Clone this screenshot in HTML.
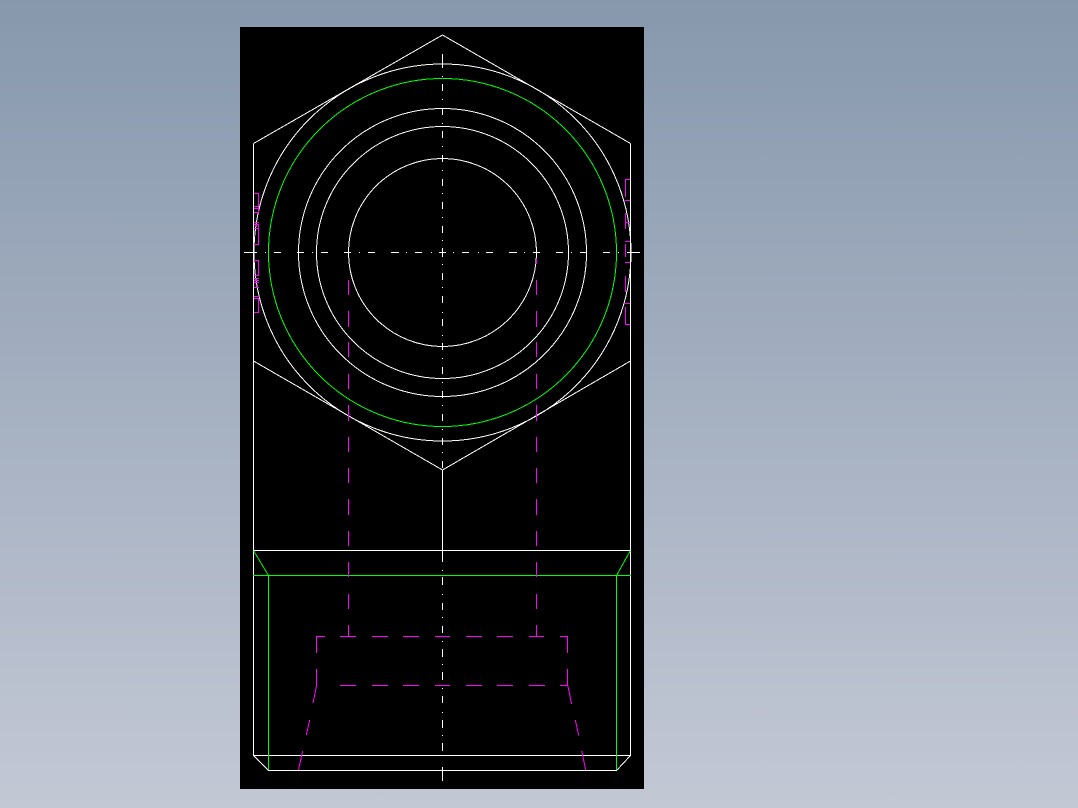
<!DOCTYPE html>
<html><head><meta charset="utf-8"><style>
html,body{margin:0;padding:0;width:1078px;height:808px;overflow:hidden;background:linear-gradient(180deg,#8798ad 0%,#c3c8d5 100%)}
svg{position:absolute;left:0;top:0}
</style></head><body>
<svg width="1078" height="808" viewBox="0 0 1078 808" fill="none" shape-rendering="crispEdges" stroke-width="1">
<rect x="240" y="27" width="404" height="762" fill="#000"/>
<g stroke="#fff">
<path d="M442.5 35L630.5 143.5M442.5 35L253.5 143.5M253.5 361L442.5 470L630.5 361"/>
<path d="M253.5 143.5V755.5M630.5 143.5V755.5M253 550.5H631M253 755.5H631M268 770.5H617M442.5 470V562"/>
<path d="M253.5 755.5L268.5 770.5M630.5 755.5L616.5 770.5"/>
<circle cx="442.5" cy="252.5" r="188.5"/>
<circle cx="442.5" cy="252.5" r="144"/>
<circle cx="442.5" cy="252.5" r="126"/>
<circle cx="442.5" cy="252.5" r="94"/>
<path d="M442.5 54V68M442.5 76V77M442.5 84V91M442.5 99V100M442.5 108V115M442.5 123V124M442.5 131V138M442.5 146V147M442.5 155V162M442.5 170V171M442.5 179V186M442.5 193V194M442.5 202V209M442.5 217V218M442.5 226V233M442.5 240V241M442.5 248V257M442.5 264V265M442.5 273V280M442.5 287V288M442.5 296V303M442.5 312V313M442.5 319V326M442.5 335V336M442.5 343V350M442.5 358V359M442.5 367V374M442.5 382V383M442.5 391V398M442.5 405V406M442.5 414V421M442.5 429V430M442.5 438V445M442.5 452V453M442.5 461V468"/>
<path d="M442.5 570V571M442.5 577V585M442.5 594V595M442.5 603V610M442.5 617V618M442.5 626V633M442.5 641V642M442.5 649V657M442.5 664V665M442.5 672V680M442.5 688V689M442.5 696V703M442.5 712V713M442.5 720V728M442.5 735V736M442.5 743V751M442.5 767V781"/>
<path d="M244 252.5H257M265 252.5H266M274 252.5H281M297 252.5H304M312 252.5H313M321 252.5H328M344 252.5H351M359 252.5H360M368 252.5H375M391 252.5H399M406 252.5H407M415 252.5H422M431 252.5H432M439 252.5H446M453 252.5H454M462 252.5H469M478 252.5H479M486 252.5H493M509 252.5H517M524 252.5H525M533 252.5H540M556 252.5H563M571 252.5H572M580 252.5H587M603 252.5H610M618 252.5H619M627 252.5H640"/>
</g>
<g stroke="#0f0">
<circle cx="442.5" cy="252.5" r="174"/>
<path d="M253 575.5H631M268.5 575V770M616.5 575V770"/>
<path d="M253.5 550.5L268.5 575.5M630.5 550.5L616.5 575.5"/>
</g>
<g stroke="#f0f">
<path d="M348.5 280V295M348.5 311V327M348.5 342V357M348.5 374V389M348.5 405V421M348.5 437V452M348.5 468V483M348.5 499V515M348.5 531V546M348.5 562V577M348.5 594V609M348.5 625V636"/>
<path d="M536.5 280V295M536.5 311V327M536.5 342V357M536.5 374V389M536.5 405V421M536.5 437V452M536.5 468V483M536.5 499V515M536.5 531V546M536.5 562V577M536.5 594V609M536.5 625V636"/>
<path d="M317 636.5H325M340 636.5H356M372 636.5H388M403 636.5H419M435 636.5H450M466 636.5H482M497 636.5H513M529 636.5H544M560 636.5H568"/>
<path d="M340 685.5H356M372 685.5H388M403 685.5H419M435 685.5H450M466 685.5H482M497 685.5H513M529 685.5H545M560 685.5H568"/>
<path d="M316.5 636V653M316.5 669V686M567.5 636V653M567.5 669V686"/>
<path d="M316.5 686L313 703M309.7 720L306.3 735M302.7 751L298.5 770M568 686L571.5 704M575.3 720L578.7 735.5M581.7 751L585.7 770"/>
<path d="M254 193.5H258.5V213M254 206.5H259M254 208.5H259M254 212.5H259M254 222.5H259M254 224.5H259M254 228.5H259M258.5 225V244.5H254"/>
<path d="M254 260.5H258.5V275.5H254M254 278.5H259M254 280.5H259M254 282.5H259M254 287.5H259M254 296.5H259M254 298.5H259M258.5 298V312.5H254"/>
<path d="M630 179.5H625.5V197M625 200.5H630M625.5 213V229M625 222.5H630M625 241.5H630M625.5 244V257M625 262.5H630M625.5 276V292M625 303.5H630M625.5 307V324.5H630"/>
<path d="M536.5 259V264"/>
</g>
</svg>
</body></html>
